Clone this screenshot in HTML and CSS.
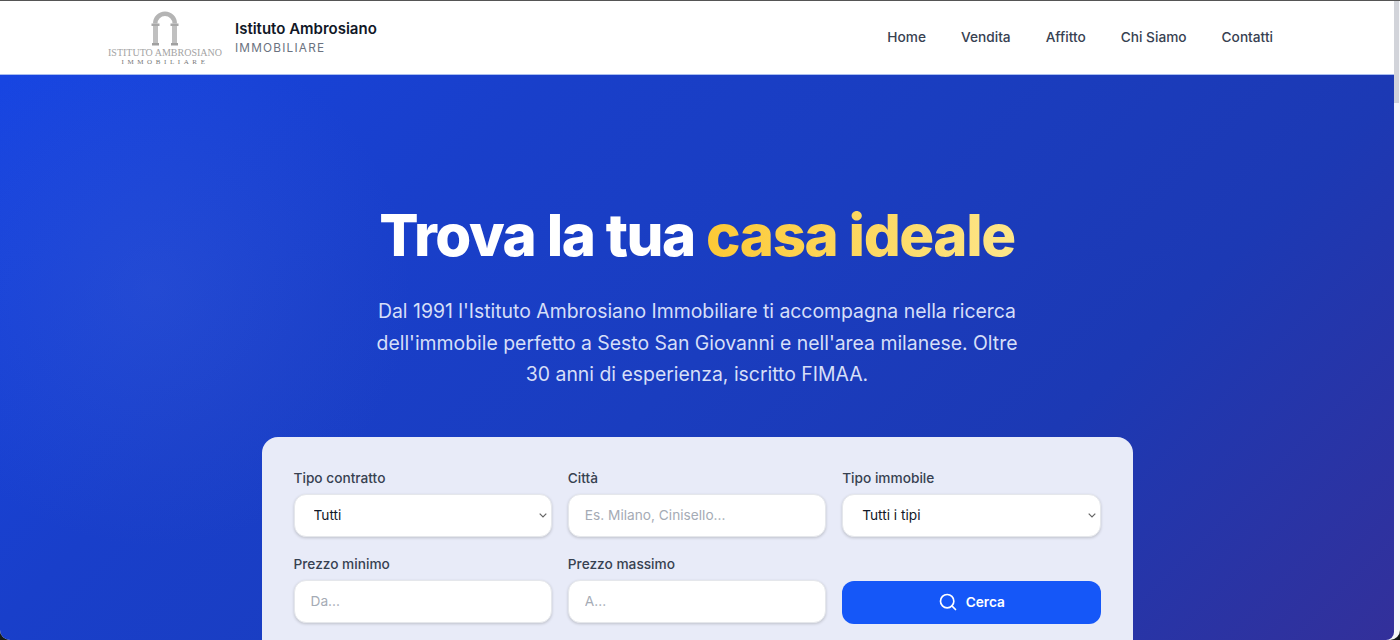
FILE: index.html
```html
<!DOCTYPE html>
<html lang="it">
<head>
<meta charset="utf-8">
<title>Istituto Ambrosiano Immobiliare</title>
<link rel="stylesheet" href="styles.css">
</head>
<body>
<div class="window">
<div class="page">
  <header class="site-header">
    <div class="brand">
      <div class="logo">
        <svg class="logo-arch" width="32" height="37" viewBox="0 0 32 36" aria-hidden="true">
          <path d="M4 13 A12 12 0 0 1 28 13 L23.5 13 A7.5 7.5 0 0 0 8.5 13 Z" fill="#b4b4b4"/>
          <rect x="2.5" y="13" width="8" height="2.5" fill="#a8a8a8"/>
          <rect x="21.5" y="13" width="8" height="2.5" fill="#a8a8a8"/>
          <rect x="4" y="15.5" width="5" height="17" fill="#c0c0c0"/>
          <rect x="23" y="15.5" width="5" height="17" fill="#c0c0c0"/>
          <rect x="3" y="32.5" width="7" height="2.5" fill="#a0a0a0"/>
          <rect x="22" y="32.5" width="7" height="2.5" fill="#a0a0a0"/>
        </svg>
        <span class="logo-name">ISTITUTO AMBROSIANO</span>
        <span class="logo-sub">IMMOBILIARE</span>
      </div>
      <div class="brand-text">
        <span class="brand-title">Istituto Ambrosiano</span>
        <span class="brand-sub">IMMOBILIARE</span>
      </div>
    </div>
    <nav class="nav">
      <a href="#">Home</a>
      <a href="#">Vendita</a>
      <a href="#">Affitto</a>
      <a href="#">Chi Siamo</a>
      <a href="#">Contatti</a>
    </nav>
  </header>
  <main class="hero">
    <h1 class="hero-title">Trova la tua <span class="accent">casa ideale</span></h1>
    <p class="hero-lead">Dal 1991 l'Istituto Ambrosiano Immobiliare ti accompagna nella ricerca dell'immobile perfetto a Sesto San Giovanni e nell'area milanese. Oltre 30 anni di esperienza, iscritto FIMAA.</p>
    <form class="search-card">
      <div class="field">
        <label for="contratto">Tipo contratto</label>
        <select id="contratto"><option>Tutti</option></select>
      </div>
      <div class="field">
        <label for="citta">Città</label>
        <input id="citta" type="text" placeholder="Es. Milano, Cinisello...">
      </div>
      <div class="field">
        <label for="tipo">Tipo immobile</label>
        <select id="tipo"><option>Tutti i tipi</option></select>
      </div>
      <div class="field">
        <label for="min">Prezzo minimo</label>
        <input id="min" type="text" placeholder="Da...">
      </div>
      <div class="field">
        <label for="max">Prezzo massimo</label>
        <input id="max" type="text" placeholder="A...">
      </div>
      <div class="field field-end">
        <button type="button" class="search-btn">
          <svg width="20" height="20" viewBox="0 0 24 24" fill="none" stroke="currentColor" stroke-width="2" stroke-linecap="round" stroke-linejoin="round" aria-hidden="true"><circle cx="11" cy="11" r="8"/><path d="m21 21-4.3-4.3"/></svg>
          Cerca
        </button>
      </div>
    </form>
  </main>
</div>
<div class="scrollbar"><div class="scroll-thumb"></div></div>
</div>
</body>
</html>
```
FILE: styles.css
```css
* { box-sizing: border-box; }
html, body { margin: 0; height: 100%; overflow: hidden; }
body { font-family: Inter, "Liberation Sans", sans-serif; background: #141a18; }
.window { height: 640px; display: flex; background: #f7f8fa; border-radius: 0 0 10px 10px; overflow: hidden; }
.page { width: 1394px; flex: none; height: 640px; overflow: hidden; border-top: 1px solid #555; }
.scrollbar { flex: 1; border-top: 1px solid #555; }
.scroll-thumb { width: 5px; height: 102px; background: #d2d4da; }
.site-header { height: 74px; background: #fff; display: flex; align-items: center; justify-content: space-between; padding: 0 121px 0 108px; border-bottom: 1px solid #a9bdf0; }
.brand { display: flex; align-items: center; gap: 13px; }
.logo { width: 114px; display: flex; flex-direction: column; align-items: center; color: #a3a3a3; }
.logo-arch { display: block; }
.logo-name { font-family: "Liberation Serif", serif; font-size: 10px; line-height: 11px; white-space: nowrap; }
.logo-sub { font-family: "Liberation Serif", serif; font-size: 7px; line-height: 8px; letter-spacing: 3.6px; color: #777; }
.brand-text { display: flex; flex-direction: column; gap: 1px; }
.brand-title { font-size: 15px; font-weight: 600; color: #111827; line-height: 20px; }
.brand-sub { font-size: 11.8px; letter-spacing: 1.2px; color: #6b7280; line-height: 16px; }
.nav { display: flex; gap: 35px; padding-bottom: 2px; }
.nav a { font-size: 13.7px; font-weight: 450; color: #374151; text-decoration: none; }
.hero { height: 565px; display: flex; flex-direction: column; align-items: center; padding-top: 126px; border-radius: 0 0 8px 8px; background: radial-gradient(circle at 11% 38%, rgba(80,110,215,.2), transparent 20%), linear-gradient(135deg, #1745e2 0%, #193fca 28%, #1a3dbf 50%, #1c39b4 72%, #33309a 100%); }
.hero-title { margin: 0; font-size: 58.2px; line-height: 68px; font-weight: 800; letter-spacing: -1.45px; color: #fff; }
.accent { background: linear-gradient(90deg, #fcc936, #fde68a); -webkit-background-clip: text; background-clip: text; color: transparent; }
.hero-lead { margin: 27px 0 0; width: 660px; text-align: center; font-size: 19.4px; line-height: 31.5px; color: #d6dff8; }
.search-card { margin-top: 46px; width: 871px; padding: 31px 32px 0; height: 220px; flex: none; border-radius: 16px; background: #e8ebf8; display: grid; grid-template-columns: repeat(3, 1fr); column-gap: 16px; row-gap: 17px; align-content: start; }
.field { display: flex; flex-direction: column; gap: 6px; }
.field-end { justify-content: flex-end; }
.field label { font-size: 13.7px; font-weight: 450; line-height: 20px; color: #374151; }
.field input, .field select { height: 43px; width: 100%; border: 1px solid #e5e7eb; border-radius: 12px; background: #fff; padding: 0 16px; font: 13.7px Inter, sans-serif; color: #111827; box-shadow: 0 1px 3px rgba(0,0,0,.18); }
.field select { appearance: none; padding-left: 19px; background: #fff url("data:image/svg+xml,%3Csvg xmlns='http://www.w3.org/2000/svg' width='8' height='5' viewBox='0 0 8 5'%3E%3Cpath d='M.7.7L4 4l3.3-3.3' fill='none' stroke='%23666' stroke-width='1.2'/%3E%3C/svg%3E") no-repeat right 4px center; }
.field input::placeholder { color: #a5abb5; }
.search-btn { height: 43px; display: flex; align-items: center; justify-content: center; gap: 8px; margin-bottom: -1px; border: 0; border-radius: 12px; background: #1557f8; color: #fff; font: 600 13.7px Inter, sans-serif; }
```
